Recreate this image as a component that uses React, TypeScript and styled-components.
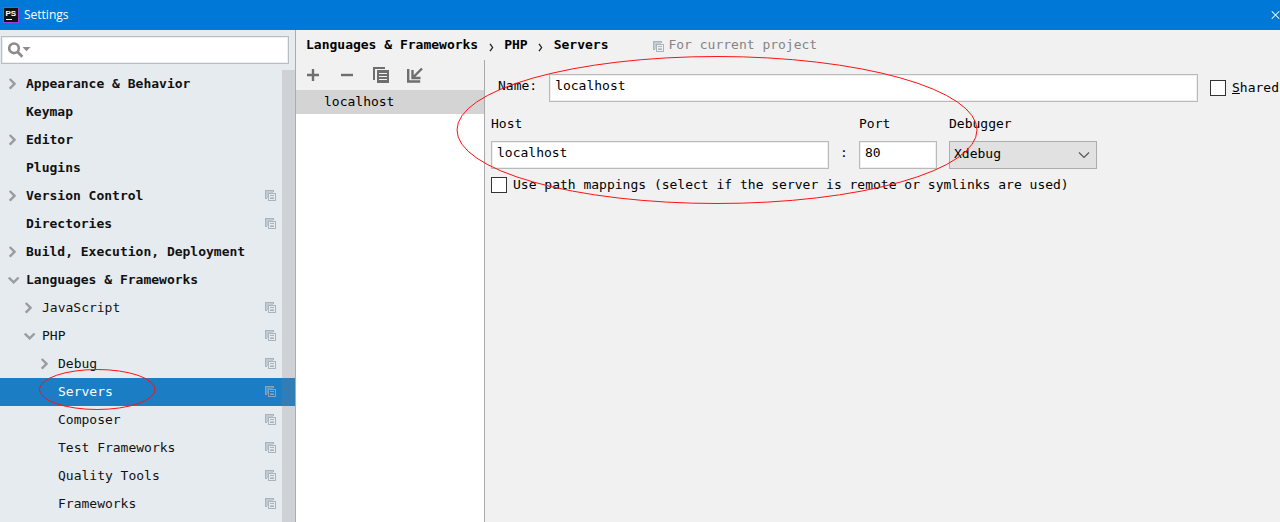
import React from "react";
import styled, { createGlobalStyle } from "styled-components";

const mono = `"DejaVu Sans Mono", "Liberation Mono", monospace`;

const GlobalStyle = createGlobalStyle`
  *, *::before, *::after { box-sizing: border-box; }
  body { margin: 0; background: #f1f1f1; color: #111; font: 13px/24px ${mono}; }
  button, input, select { font: inherit; color: inherit; margin: 0; }
`;

const Window = styled.div`
  position: relative;
  display: flex;
  flex-direction: column;
  min-height: 100vh;
  overflow: hidden;
`;

const TitleBar = styled.header`
  display: flex;
  align-items: center;
  gap: 5px;
  height: 30px;
  padding-left: 3px;
  background: #0078d7;
  color: #fff;
  overflow: hidden;
`;

const Title = styled.h1`
  flex: 1;
  margin: 0;
  font: 400 12px/16px "Open Sans", "Noto Sans", sans-serif;
`;

const CloseButton = styled.button`
  display: flex;
  flex: none;
  width: 9px;
  height: 12px;
  padding: 0;
  border: 0;
  background: none;
  overflow: hidden;
`;

const Body = styled.div`
  display: flex;
  flex: 1;
`;

const Sidebar = styled.nav`
  display: flex;
  flex-direction: column;
  flex: none;
  width: 296px;
  border-right: 1px solid #a9adb1;
  background: #e6ebef;
`;

const SearchBox = styled.label`
  display: flex;
  align-items: center;
  gap: 4px;
  height: 28px;
  margin: 6px 6px 6px 1px;
  padding-left: 6px;
  border: 1px solid #b9bdc0;
  background: #fff;
  box-shadow: inset 0 0 0 1px #eceeef;
`;

const SearchInput = styled.input`
  flex: 1;
  min-width: 0;
  padding: 0;
  border: 0;
  outline: 0;
  background: none;
`;

const TreeArea = styled.div`
  position: relative;
  flex: 1;
`;

const Tree = styled.ul`
  margin: 0;
  padding: 0;
  list-style: none;
`;

const TreeRow = styled.li<{ $level: number; $bold?: boolean; $selected?: boolean }>`
  display: flex;
  align-items: center;
  height: 28px;
  padding: 0 19px 0 ${(p) => 8 + p.$level * 16}px;
  font-weight: ${(p) => (p.$bold ? 700 : 400)};
  background: ${(p) => (p.$selected ? "#1b7dc4" : "transparent")};
  color: ${(p) => (p.$selected ? "#fff" : "#111")};
`;

const Toggle = styled.span`
  display: flex;
  flex: none;
  width: 18px;
`;

const RowLabel = styled.span`
  flex: 1;
  white-space: nowrap;
`;

const ScrollThumb = styled.div`
  position: absolute;
  top: 0;
  right: 0;
  bottom: 0;
  width: 13px;
  background: rgba(128, 124, 132, 0.23);
`;

const Content = styled.main`
  display: flex;
  flex-direction: column;
  flex: 1;
  min-width: 0;
`;

const Breadcrumb = styled.div`
  display: flex;
  align-items: center;
  height: 30px;
  padding-left: 10px;
  font-weight: 700;
  color: #000;
  white-space: pre;
`;

const Separator = styled.span`
  display: flex;
  justify-content: center;
  width: 26px;
  padding-top: 4px;
`;

const Scope = styled.span`
  display: flex;
  align-items: center;
  gap: 4px;
  margin-left: 45px;
  font-weight: 400;
  color: #848484;

  svg { margin-top: 4px; }
`;

const Panels = styled.div`
  display: flex;
  flex: 1;
`;

const ServerPanel = styled.section`
  display: flex;
  flex-direction: column;
  flex: none;
  width: 189px;
  border-right: 1px solid #a9a9a9;
`;

const Toolbar = styled.div`
  display: flex;
  align-items: center;
  gap: 18px;
  height: 30px;
  padding-left: 9px;
`;

const ToolButton = styled.button`
  display: flex;
  width: 16px;
  height: 16px;
  padding: 0;
  border: 0;
  background: none;
`;

const ServerList = styled.ul`
  flex: 1;
  margin: 0;
  padding: 0;
  list-style: none;
  background: #fff;
`;

const ServerItem = styled.li`
  height: 24px;
  padding-left: 28px;
  background: #d4d4d4;
  color: #000;
`;

const Form = styled.form`
  flex: 1;
  min-width: 0;
  padding: 14px 0 0 6px;
  color: #000;
`;

const NameRow = styled.div`
  display: flex;
  align-items: center;
  gap: 12px;
  padding: 0 1px 0 7px;

  > label:first-child { padding-bottom: 4px; }
`;

const FieldRow = styled.div`
  display: flex;
  align-items: flex-end;
  margin-top: 10px;
`;

const Field = styled.div<{ $width: number }>`
  display: flex;
  flex-direction: column;
  gap: 5px;
  width: ${(p) => p.$width}px;

  & + & { margin-left: 12px; }
`;

const Label = styled.label`
  white-space: nowrap;
`;

const TextInput = styled.input`
  flex: 1;
  width: 100%;
  min-width: 0;
  height: 28px;
  min-height: 28px;
  padding: 0 5px 6px;
  border: 1px solid #b9b9b9;
  border-radius: 0;
  outline: 0;
  background: #fff;
  box-shadow: inset 0 0 0 1px #efefef;
`;

const Colon = styled.span`
  width: 30px;
  height: 28px;
  text-align: center;
`;

const SelectWrap = styled.div`
  position: relative;
  height: 28px;
`;

const Select = styled.select`
  appearance: none;
  width: 100%;
  height: 28px;
  padding: 0 24px 2px 4px;
  border: 1px solid #adadad;
  border-radius: 0;
  outline: 0;
  background: #e1e1e1;
`;

const SelectArrow = styled.svg`
  position: absolute;
  right: 7px;
  top: 10px;
  pointer-events: none;
`;

const CheckRow = styled.label`
  display: flex;
  align-items: center;
  gap: 6px;
  white-space: nowrap;
`;

const PathRow = styled(CheckRow)`
  margin-top: 4px;
`;

const CheckBox = styled.input`
  appearance: none;
  flex: none;
  width: 16px;
  height: 16px;
  border: 1px solid #333;
  background: #fff;
  &:checked { background: #0078d7; }
`;

const Marks = styled.svg`
  position: absolute;
  top: 0;
  left: 0;
  pointer-events: none;
`;

const Chevron = ({ open }: { open?: boolean }) => (
  <svg width="12" height="12" viewBox="0 0 12 12" fill="none" stroke="#999d9f" strokeWidth="2.4" aria-hidden="true">
    <path d={open ? "M.8 3.5 5.7 8.3 10.6 3.5" : "M1.7 1 6.6 5.8 1.7 10.7"} />
  </svg>
);

const CopyMark = ({ selected }: { selected?: boolean }) => (
  <svg width="11" height="12" viewBox="0 0 11 12" shapeRendering="crispEdges" opacity={selected ? 0.75 : 1} aria-hidden="true">
    <path fill="#a8b3bd" d="M0 0h9v2H8V1H1v7h1v1H0zM3 3h8v8H3zM4 4v6h6V4z" fillRule="evenodd" />
    <path fill="#a8b3bd" d="M5 5h4v1H5zM5 8h4v1H5z" />
    <path fill="#a8b3bd" opacity=".6" d="M1 1h7v2H3v5H1zM5 7h4v1H5z" />
  </svg>
);

type Node = { name: string; level: number; open?: boolean; leaf?: boolean; scoped?: boolean; selected?: boolean };

const nodes: Node[] = [
  { name: "Appearance & Behavior", level: 0 },
  { name: "Keymap", level: 0, leaf: true },
  { name: "Editor", level: 0 },
  { name: "Plugins", level: 0, leaf: true },
  { name: "Version Control", level: 0, scoped: true },
  { name: "Directories", level: 0, leaf: true, scoped: true },
  { name: "Build, Execution, Deployment", level: 0 },
  { name: "Languages & Frameworks", level: 0, open: true },
  { name: "JavaScript", level: 1, scoped: true },
  { name: "PHP", level: 1, open: true, scoped: true },
  { name: "Debug", level: 2, scoped: true },
  { name: "Servers", level: 2, leaf: true, scoped: true, selected: true },
  { name: "Composer", level: 2, leaf: true, scoped: true },
  { name: "Test Frameworks", level: 2, leaf: true, scoped: true },
  { name: "Quality Tools", level: 2, leaf: true, scoped: true },
  { name: "Frameworks", level: 2, leaf: true, scoped: true },
];

const Crumb = () => (
  <Separator aria-hidden="true">
    <svg width="5" height="9" viewBox="0 0 5 9" fill="none" stroke="#222" strokeWidth="1.3">
      <path d="M1 .8 3.6 4.5 1 8.2" />
    </svg>
  </Separator>
);

export default function App() {
  return (
    <Window>
      <GlobalStyle />
      <TitleBar>
        <svg width="16" height="16" viewBox="0 0 16 16" aria-hidden="true">
          <rect x=".5" y=".5" width="15" height="15" fill="#111" stroke="#9147dc" />
          <text x="2.4" y="8.8" fill="#fff" fontFamily="Liberation Sans, sans-serif" fontWeight="700" fontSize="8">PS</text>
          <path d="M3 12.5h6" stroke="#fff" />
        </svg>
        <Title>Settings</Title>
        <CloseButton aria-label="Close">
          <svg width="12" height="12" viewBox="0 0 12 12" stroke="#fff" strokeWidth="1.4">
            <path d="M1 1 11 11M11 1 1 11" />
          </svg>
        </CloseButton>
      </TitleBar>
      <Body>
        <Sidebar aria-label="Settings sections">
          <SearchBox>
            <svg width="23" height="16" viewBox="0 0 23 16" fill="none" aria-hidden="true">
              <circle cx="6" cy="6.3" r="4.8" stroke="#8c8c8c" strokeWidth="2.6" />
              <path d="m9.4 9.7 5 5" stroke="#8c8c8c" strokeWidth="2.8" />
              <path d="M14.5 5h8l-4 4.3z" fill="#8c8c8c" />
            </svg>
            <SearchInput type="text" aria-label="Search settings" />
          </SearchBox>
          <TreeArea>
            <Tree>
              {nodes.map((n) => (
                <TreeRow key={n.name} $level={n.level} $bold={n.level === 0} $selected={n.selected}>
                  <Toggle>{!n.leaf && <Chevron open={n.open} />}</Toggle>
                  <RowLabel>{n.name}</RowLabel>
                  {n.scoped && <CopyMark selected={n.selected} />}
                </TreeRow>
              ))}
            </Tree>
            <ScrollThumb />
          </TreeArea>
        </Sidebar>
        <Content>
          <Breadcrumb>
            <span>Languages &amp; Frameworks</span>
            <Crumb />
            <span>PHP</span>
            <Crumb />
            <span>Servers</span>
            <Scope>
              <CopyMark />
              For current project
            </Scope>
          </Breadcrumb>
          <Panels>
            <ServerPanel>
              <Toolbar>
                <ToolButton aria-label="Add">
                  <svg width="16" height="16" viewBox="0 0 16 16" stroke="#6e6e6e" strokeWidth="2.4">
                    <path d="M2 8h12M8 2v12" />
                  </svg>
                </ToolButton>
                <ToolButton aria-label="Remove">
                  <svg width="16" height="16" viewBox="0 0 16 16" stroke="#6e6e6e" strokeWidth="2.4">
                    <path d="M2 8h12" />
                  </svg>
                </ToolButton>
                <ToolButton aria-label="Copy">
                  <svg width="16" height="16" viewBox="0 0 16 16" fill="#6e6e6e" fillRule="evenodd">
                    <path d="M0 0h12v2H2v11H0zM4 3h12v13H4zM6 6v1h8V6zM6 9v1h8V9zM6 12v1h8v-1z" />
                  </svg>
                </ToolButton>
                <ToolButton aria-label="Import">
                  <svg width="16" height="16" viewBox="0 0 16 16" fill="none" stroke="#6e6e6e" strokeWidth="2.4">
                    <path d="M1.200 2v12.500h12M15 1.500 6.500 10M5.500 3v8h8" />
                  </svg>
                </ToolButton>
              </Toolbar>
              <ServerList>
                <ServerItem>localhost</ServerItem>
              </ServerList>
            </ServerPanel>
            <Form onSubmit={(e) => e.preventDefault()}>
              <NameRow>
                <Label htmlFor="name">Name:</Label>
                <TextInput id="name" type="text" defaultValue="localhost" />
                <CheckRow>
                  <CheckBox type="checkbox" />
                  <span><u>S</u>hared</span>
                </CheckRow>
              </NameRow>
              <FieldRow>
                <Field $width={338}>
                  <Label htmlFor="host">Host</Label>
                  <TextInput id="host" type="text" defaultValue="localhost" />
                </Field>
                <Colon>:</Colon>
                <Field $width={78}>
                  <Label htmlFor="port">Port</Label>
                  <TextInput id="port" type="text" defaultValue="80" />
                </Field>
                <Field $width={148}>
                  <Label htmlFor="debugger">Debugger</Label>
                  <SelectWrap>
                    <Select id="debugger" defaultValue="Xdebug">
                      <option>Xdebug</option>
                      <option>Zend Debugger</option>
                    </Select>
                    <SelectArrow width="12" height="8" viewBox="0 0 12 8" fill="none" stroke="#555" strokeWidth="1.2">
                      <path d="M1 1.500 6 6.500 11 1.500" />
                    </SelectArrow>
                  </SelectWrap>
                </Field>
              </FieldRow>
              <PathRow>
                <CheckBox type="checkbox" />
                <span>Use path mappings (select if the server is remote or symlinks are used)</span>
              </PathRow>
            </Form>
          </Panels>
        </Content>
      </Body>
      <Marks width="1000" height="420" viewBox="0 0 1000 420" fill="none" stroke="#f11" aria-hidden="true">
        <ellipse cx="717" cy="130" rx="260" ry="73.500" />
        <ellipse cx="97.200" cy="389.500" rx="57.800" ry="20" />
      </Marks>
    </Window>
  );
}
